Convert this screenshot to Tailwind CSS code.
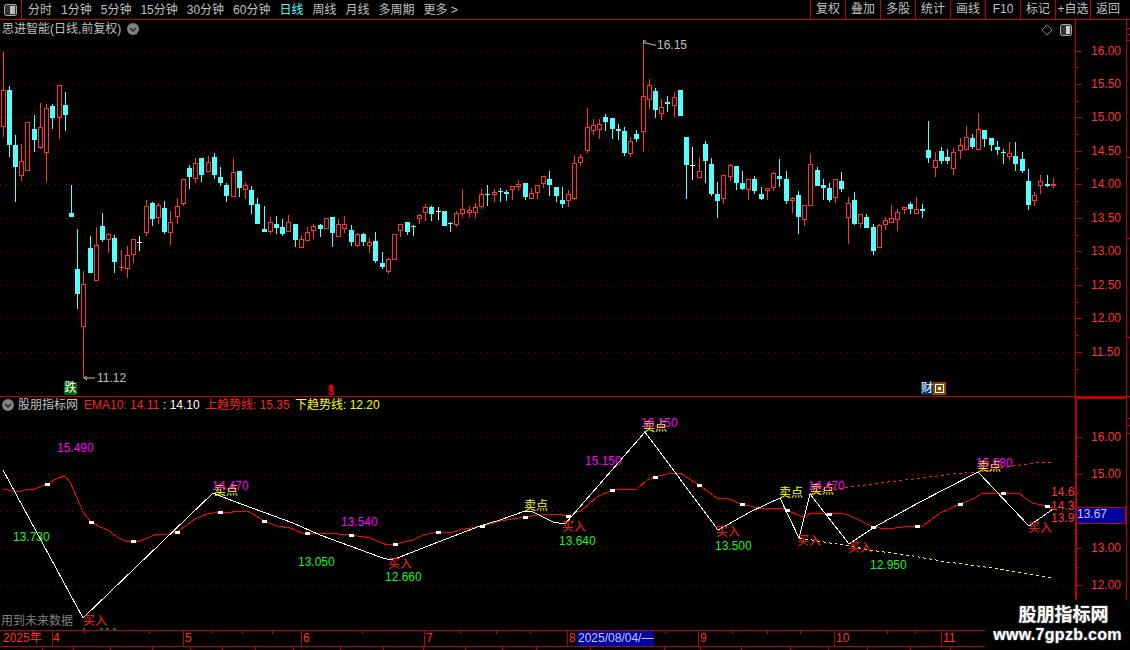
<!DOCTYPE html>
<html lang="zh-CN">
<head>
  <meta charset="UTF-8" />
  <title>思进智能 日线</title>
  <script src="https://cdn.jsdelivr.net/npm/@tailwindcss/browser@4"></script>
</head>
<body class="bg-black">
  <div class="relative w-[1130px] h-[650px] overflow-hidden bg-black flex flex-col text-[12px] leading-[14px] text-[#c0c0c0] font-['Liberation_Sans','Noto_Sans_CJK_SC',sans-serif]">

    <!-- Toolbar -->
    <header class="h-[20px] shrink-0 flex items-center border-b border-[#c00000]">
      <div class="w-[22px] h-full flex items-center justify-center border-r border-[#c00000]">
        <svg width="13" height="12" viewBox="0 0 13 12"><rect x="0.5" y="0.5" width="12" height="11" rx="2" fill="#333" stroke="#aaa"/><rect x="6" y="2" width="5" height="8" fill="#bbb"/></svg>
      </div>
      <nav class="flex items-center pl-[6px] gap-[9px]">
        <span>分时</span><span>1分钟</span><span>5分钟</span><span>15分钟</span><span>30分钟</span><span>60分钟</span>
        <span class="text-[#54ffff]">日线</span><span>周线</span><span>月线</span><span>多周期</span><span>更多 &gt;</span>
      </nav>
      <div class="ml-auto mr-[5px] flex h-full items-center text-center leading-[19px]">
        <span class="w-[35px] h-full border-l border-[#c00000]">复权</span>
        <span class="w-[35px] h-full border-l border-[#c00000]">叠加</span>
        <span class="w-[35px] h-full border-l border-[#c00000]">多股</span>
        <span class="w-[35px] h-full border-l border-[#c00000]">统计</span>
        <span class="w-[35px] h-full border-l border-[#c00000]">画线</span>
        <span class="w-[35px] h-full border-l border-[#c00000]">F10</span>
        <span class="w-[35px] h-full border-l border-[#c00000]">标记</span>
        <span class="w-[35px] h-full border-l border-[#c00000] whitespace-nowrap">+自选</span>
        <span class="w-[35px] h-full border-l border-[#c00000]">返回</span>
      </div>
    </header>

    <!-- Price panel -->
    <section class="relative h-[377px] shrink-0">
      <div class="absolute left-[2px] top-[2px] flex items-center gap-[6px]">
        <span>思进智能(日线,前复权)</span>
        <svg width="12" height="12" viewBox="0 0 12 12"><circle cx="6" cy="6" r="6" fill="#808080"/><path d="M3 5l3 3 3-3" fill="none" stroke="#222" stroke-width="1.4"/></svg>
      </div>
      <svg id="price" class="block" width="1130" height="377" viewBox="0 20 1130 377"></svg>
    </section>

    <!-- Indicator panel -->
    <section class="relative h-[233px] shrink-0">
      <div class="absolute left-[2px] top-[1px] flex items-center whitespace-nowrap">
        <svg width="12" height="12" viewBox="0 0 12 12"><circle cx="6" cy="6" r="6" fill="#808080"/><path d="M3 5l3 3 3-3" fill="none" stroke="#222" stroke-width="1.4"/></svg>
        <span class="ml-[4px] w-[66px]">股朋指标网</span>
        <span class="w-[79px] text-[#ff2020]">EMA10: 14.11</span>
        <span class="w-[42px] text-white">: 14.10</span>
        <span class="w-[90px] text-[#ff2020]">上趋势线: 15.35</span>
        <span class="text-[#ffff00]">下趋势线: 12.20</span>
      </div>
      <svg id="indicator" class="block" width="1130" height="233" viewBox="0 397 1130 233"></svg>
    </section>

    <!-- Time axis -->
    <svg id="timeaxis" class="block shrink-0" width="1130" height="20" viewBox="0 630 1130 20"></svg>

    <!-- Watermark -->
    <div class="absolute right-0 bottom-0 w-[145px] h-[50px] bg-black flex flex-col items-center pt-[4px] text-white font-bold [text-shadow:0_0_2px_#999]">
      <span class="text-[18px] leading-[22px] ml-[12px]">股朋指标网</span>
      <span class="text-[16px] leading-[18px] tracking-[0.3px] whitespace-nowrap">www.7gpzb.com</span>
    </div>
  </div>

  <script>
    const RED = '#ff3232', CYAN = '#54ffff', LINE = '#c00000';

    // x, colour, wick top, body top, body bottom, wick bottom (pixels)
    const candles = [
      [3,'r',52,90,127,137],[9,'c',86,90,145,157],[15,'c',135,145,167,202],[21,'r',144,161,176,181],[27,'r',122,122,171,171],
      [34,'c',115,129,140,152],[40,'r',103,127,148,149],[46,'r',104,108,153,182],[52,'c',104,106,118,129],[59,'r',85,85,118,139],
      [65,'c',92,105,115,131],[71,'c',185,213,217,217],[77,'c',229,269,294,309],[83,'r',271,284,327,378],[90,'c',236,248,273,273],
      [96,'r',227,245,281,281],[102,'c',213,226,240,242],[108,'r',233,234,240,253],[114,'c',235,238,262,273],[121,'r',250,267,268,271],
      [127,'r',246,255,269,278],[133,'r',239,239,255,263],[139,'w',236,242,243,251],[146,'r',200,206,233,236],[152,'c',202,203,219,226],
      [158,'r',203,205,218,224],[164,'c',201,208,232,234],[170,'r',211,222,233,245],[177,'r',198,206,217,224],[183,'r',179,179,204,206],
      [189,'c',165,168,177,189],[195,'r',158,163,179,183],[201,'c',158,158,175,182],[208,'r',156,162,172,172],[214,'c',153,157,175,179],
      [220,'c',167,177,183,186],[226,'c',183,185,196,202],[233,'r',158,172,197,197],[239,'c',171,171,188,197],[245,'r',182,185,190,199],
      [251,'c',186,190,205,214],[257,'c',198,204,224,224],[264,'c',206,229,232,232],[270,'r',217,222,232,234],[276,'c',216,224,228,234],
      [282,'c',219,227,234,236],[288,'r',215,222,232,232],[295,'c',224,224,240,247],[301,'r',235,239,248,248],[307,'r',227,232,241,241],
      [313,'r',224,226,231,239],[320,'c',224,225,229,237],[326,'r',218,218,229,229],[332,'c',217,217,233,247],[338,'r',219,224,237,237],
      [344,'r',216,224,229,233],[351,'c',225,230,242,246],[357,'r',233,234,246,247],[363,'c',233,234,242,246],[369,'r',238,242,246,253],
      [375,'c',232,241,261,263],[382,'c',252,263,267,269],[388,'r',258,259,272,274],[394,'r',234,234,260,260],[400,'r',224,224,231,237],
      [407,'c',222,222,232,235],[413,'c',225,226,227,236],[419,'r',214,215,219,224],[425,'r',204,207,213,221],[431,'c',206,207,214,221],
      [438,'w',207,211,212,220],[444,'c',211,211,226,226],[450,'c',222,223,224,232],[456,'r',211,213,225,227],[462,'r',189,209,214,217],
      [469,'r',206,210,213,217],[475,'r',203,207,213,218],[481,'r',189,194,207,209],[487,'c',185,194,195,206],[494,'r',189,192,195,202],
      [500,'c',188,191,192,202],[506,'c',190,192,194,201],[512,'r',186,186,190,200],[518,'r',180,184,187,191],[525,'c',183,183,197,200],
      [531,'r',188,193,199,199],[537,'r',185,185,193,199],[543,'r',176,176,184,188],[549,'c',171,179,185,196],[556,'c',187,187,196,202],
      [562,'c',187,200,204,208],[568,'r',190,194,201,207],[574,'r',155,163,199,200],[580,'r',154,157,163,166],[587,'r',108,127,151,153],
      [593,'r',119,125,131,135],[599,'r',119,124,130,139],[605,'c',114,117,122,131],[612,'c',118,118,129,139],[618,'c',124,129,131,140],
      [624,'c',127,131,153,156],[630,'r',137,141,154,157],[636,'c',130,134,139,142],[643,'r',40,96,132,152],[649,'r',79,85,100,109],
      [655,'c',88,91,110,118],[661,'r',99,107,114,120],[667,'c',96,102,104,112],[674,'r',92,97,106,117],[680,'c',90,90,116,116],
      [686,'c',137,137,165,199],[692,'w',147,165,166,180],[699,'r',157,171,178,178],[705,'c',141,144,161,183],[711,'c',158,164,194,196],
      [717,'c',182,194,201,218],[723,'r',175,175,199,204],[730,'r',164,165,177,181],[736,'c',166,166,183,190],[742,'c',171,183,189,190],
      [748,'r',179,179,190,200],[754,'c',176,179,191,194],[761,'c',187,194,199,200],[767,'r',188,188,191,200],[773,'r',172,173,188,191],
      [779,'c',159,176,179,187],[786,'c',171,179,201,204],[792,'r',197,198,201,213],[798,'c',191,195,217,234],[804,'r',205,205,220,226],
      [810,'r',154,164,206,206],[817,'c',167,170,186,186],[823,'c',179,185,188,200],[829,'c',183,188,200,202],[835,'r',179,179,198,203],
      [841,'c',172,181,189,192],[848,'r',197,203,218,244],[854,'c',192,200,224,225],[860,'r',214,214,224,228],[866,'c',214,217,228,228],
      [873,'c',224,227,251,255],[879,'r',224,225,248,248],[885,'r',217,220,225,230],[891,'r',205,218,223,223],[897,'r',209,212,220,231],
      [904,'r',207,207,210,214],[910,'c',202,204,209,214],[916,'r',197,209,214,214],[922,'c',204,209,211,218],[928,'c',121,150,158,163],
      [935,'r',152,160,168,177],[941,'c',147,151,161,164],[947,'c',149,157,161,164],[953,'r',148,152,169,175],[960,'r',138,145,151,159],
      [966,'r',126,137,150,150],[972,'c',134,138,147,149],[978,'r',113,129,150,150],[984,'c',130,130,139,147],[991,'c',138,138,145,151],
      [997,'c',141,147,150,155],[1003,'c',149,152,153,164],[1009,'r',142,153,157,161],[1015,'c',142,156,164,171],[1022,'c',152,159,171,173],
      [1028,'c',169,181,205,210],[1034,'r',192,195,201,206],[1040,'r',175,181,186,194],[1047,'c',175,184,186,187],[1053,'r',178,184,186,188]
    ];

    function text(x, y, s, fill, anchor) {
      return `<text x="${x}" y="${y}" fill="${fill}" font-size="12" dominant-baseline="middle"${anchor ? ` text-anchor="${anchor}"` : ''}>${s}</text>`;
    }
    function rect(x, y, w, h, fill) {
      return `<rect x="${x}" y="${y}" width="${w}" height="${h}" fill="${fill}"/>`;
    }
    function grid(y, x2) {
      return `<line x1="0" x2="${x2}" y1="${y + 0.5}" y2="${y + 0.5}" stroke="#900000" stroke-dasharray="1 5"/>`;
    }

    function drawCandle([x, c, wt, bt, bb, wb]) {
      const col = c === 'r' ? RED : c === 'c' ? CYAN : '#fff';
      let s = '';
      if (wt < bt) s += rect(x, wt, 1, bt - wt, col);
      if (wb > bb) s += rect(x, bb, 1, wb - bb, col);
      if (bb - bt <= 1) return s + rect(x - 2, bt, 5, 1, col);
      if (c === 'r') return s + `<rect x="${x - 1.5}" y="${bt + 0.5}" width="4" height="${bb - bt - 1}" fill="#000" stroke="${col}"/>`;
      return s + rect(x - 2, bt, 5, bb - bt, col);
    }

    // Upper chart
    let p = '<g shape-rendering="crispEdges">';
    [51, 84, 117, 151, 184, 218, 251, 285, 318, 352].forEach(y => p += grid(y, 1075));
    candles.forEach(c => p += drawCandle(c));
    p += rect(0, 396, 1130, 1, LINE);
    p += rect(1075, 20, 1, 377, LINE);
    p += rect(1126, 20, 1, 377, LINE);
    [51, 84, 117, 151, 184, 218, 251, 285, 318, 352].forEach(y => p += rect(1076, y, 6, 1, LINE));
    [67, 101, 134, 168, 201, 235, 268, 302, 335, 369].forEach(y => p += rect(1076, y, 3, 1, LINE));
    [28, 34, 40, 157, 238, 337].forEach(y => p += rect(1127, y, 3, 1, LINE));
    p += '</g>';
    [['16.00', 51], ['15.50', 84], ['15.00', 117], ['14.50', 151], ['14.00', 184], ['13.50', 218], ['13.00', 251], ['12.50', 285], ['12.00', 318], ['11.50', 352]]
      .forEach(([v, y]) => p += text(1091, y + 1, v, RED));
    // high / low flags
    p += `<path d="M643 41h3M643 43h3l8 2h2" stroke="#c0c0c0" fill="none"/>` + text(657, 46, '16.15', '#c0c0c0');
    p += `<path d="M95 378H84M84 378l3-2M84 378l3 2" stroke="#c0c0c0" fill="none"/>` + text(97, 379, '11.12', '#c0c0c0');
    // markers
    p += rect(64, 382, 13, 13, '#006400') + text(70.5, 389, '跌', '#fff', 'middle');
    p += `<path d="M331 384l3 3h-6z" fill="#f00"/>` + `<text x="331" y="392" fill="#f00" font-size="11" font-weight="bold" text-anchor="middle" dominant-baseline="middle">$</text>`;
    p += rect(921, 382, 12, 13, '#003366') + text(927, 389, '财', '#fff', 'middle');
    p += rect(933, 382, 13, 13, '#8b4a00') + '<rect x="935.5" y="384.5" width="8" height="8" fill="none" stroke="#fff"/><rect x="938" y="387" width="3" height="3" fill="#fff"/>';
    // top right tools
    p += '<path d="M1047 25l5 5-5 5-5-5z" fill="none" stroke="#808080"/>';
    p += '<rect x="1060.5" y="24.5" width="11" height="11" rx="2" fill="#333" stroke="#aaa"/><rect x="1066" y="26" width="4" height="8" fill="#ccc"/>';
    document.getElementById('price').innerHTML = p;

    // Lower chart
    const zigzag = '3,470 83,618 213,493 233,501 263,512 293,523 320,535 350,546 380,557 390,560 400,557 433,544 480,526 500,520 525,511 533,512 553,522 565,524 645,432 718,530 750,512 780,498 799,538 810,494 849,544 873,528 918,503 978,472 1029,526 1053,509';
    const ema = '3,489 13,491 20,492 27,489 35,489 47,484 58,478 65,476 70,482 77,498 83,512 91,522 100,527 108,530 117,537 125,541 133,541 140,541 157,534 170,534 177,532 195,519 207,514 220,512 228,513 237,511 248,511 264,521 277,526 290,528 302,533 307,533 325,533 351,535 370,538 387,545 395,544 400,543 413,540 423,535 438,532 450,533 460,530 482,526 500,521 525,517 543,514 557,514 568,516 582,510 597,497 612,490 637,489 647,480 655,477 667,474 680,473 699,485 717,498 728,499 742,504 762,509 780,508 787,510 802,517 812,513 829,514 843,513 857,519 873,527 887,529 903,527 917,526 923,526 940,513 960,504 973,499 983,493 1003,493 1020,494 1032,503 1047,506 1053,508';
    const dots = [[47,484],[91,522],[133,541],[177,532],[220,512],[264,521],[307,533],[351,535],[395,544],[438,532],[482,526],[525,517],[568,516],[612,490],[655,477],[699,485],[742,504],[787,510],[829,514],[873,527],[917,526],[960,504],[1003,493],[1047,506]];

    let q = '<g shape-rendering="crispEdges">';
    [437, 474, 511, 548, 585].forEach(y => q += grid(y, 1075));
    q += `<polyline points="810,494 843,488 880,483 913,479 953,474 978,472 1013,466 1043,462 1053,462" fill="none" stroke="#ff2020" stroke-dasharray="3 3"/>`;
    q += `<polyline points="799,538 849,546 870,550 913,556 947,562 993,568 1053,578" fill="none" stroke="#ffff00" stroke-dasharray="3 3"/>`;
    q += `<polyline points="${ema}" fill="none" stroke="#ff0000"/>`;
    q += `<polyline points="${zigzag}" fill="none" stroke="#fff"/>`;
    dots.forEach(([x, y]) => q += rect(x - 2, y - 1, 5, 3, '#fff'));
    q += rect(1075, 397, 2, 233, LINE) + rect(1076, 397, 50, 2, LINE) + rect(1126, 397, 1, 233, LINE);
    [437, 474, 511, 548, 585].forEach(y => q += rect(1076, y, 6, 1, LINE));
    [456, 493, 530, 567].forEach(y => q += rect(1076, y, 3, 1, LINE));
    [418, 425, 433].forEach(y => q += rect(1127, y, 3, 1, LINE));
    q += `<rect x="1076.5" y="507.5" width="49" height="16" fill="#0000a0" stroke="${LINE}"/>`;
    q += '</g>';
    [['16.00', 437], ['15.00', 474], ['13.00', 548], ['12.00', 585]].forEach(([v, y]) => q += text(1091, y + 1, v, RED));
    q += text(1077, 515, '13.67', '#c8c8ff');
    [['14.6', 493], ['14.3', 507], ['13.9', 519]].forEach(([v, y]) => q += text(1051, y, v, RED));

    // sell marks go under the magenta values, as in the terminal
    [[83, 622], [388, 565], [562, 528], [716, 533], [797, 542], [848, 549], [1028, 529]].forEach(([x, y]) => q += text(x, y, '买入', '#ff2020'));
    [[214, 492], [524, 507], [643, 428], [779, 494], [810, 491], [977, 468]].forEach(([x, y]) => q += text(x, y, '卖点', '#ffff00'));
    [[57, 449, '15.490'], [212, 487, '14.470'], [341, 523, '13.540'], [585, 462, '15.150'], [808, 487, '14.470'], [976, 464, '15.080'], [641, 424, '16.150']]
      .forEach(([x, y, v]) => q += text(x, y, v, '#ff00ff'));
    [[13, 538, '13.730'], [298, 563, '13.050'], [385, 578, '12.660'], [559, 542, '13.640'], [715, 547, '13.500'], [870, 566, '12.950']]
      .forEach(([x, y, v]) => q += text(x, y, v, '#20f020'));
    q += text(1, 622, '用到未来数据', '#808080');
    q += '<path d="M83 629h2M100 629h3M106 629h3M113 629h3" stroke="#20f020"/>';
    document.getElementById('indicator').innerHTML = q;

    // Time axis
    let t = '<g shape-rendering="crispEdges">';
    t += rect(0, 630, 985, 1, LINE) + rect(0, 646, 985, 1, LINE);
    [52, 183, 301, 424, 567, 698, 834, 941].forEach(x => t += rect(x, 630, 1, 16, LINE));
    [84, 149, 212, 242, 272, 362, 460, 496, 530, 665, 732, 767, 800, 887, 915].forEach(x => t += rect(x, 631, 1, 3, LINE));
    [42, 73, 110, 152, 190, 222, 255, 293, 340, 383, 423, 465, 502, 536, 590, 664, 700, 741, 790, 828, 867, 910, 950].forEach(x => t += rect(x, 647, 1, 3, LINE));
    t += rect(577, 631, 77, 15, '#0000a0') + '</g>';
    t += text(3, 639, '2025年', RED);
    [[53, '4'], [185, '5'], [303, '6'], [426, '7'], [569, '8'], [700, '9'], [836, '10'], [943, '11']].forEach(([x, v]) => t += text(x, 639, v, RED));
    t += text(578, 639, '2025/08/04/—', '#c8c8ff');
    document.getElementById('timeaxis').innerHTML = t;
  </script>
</body>
</html>
